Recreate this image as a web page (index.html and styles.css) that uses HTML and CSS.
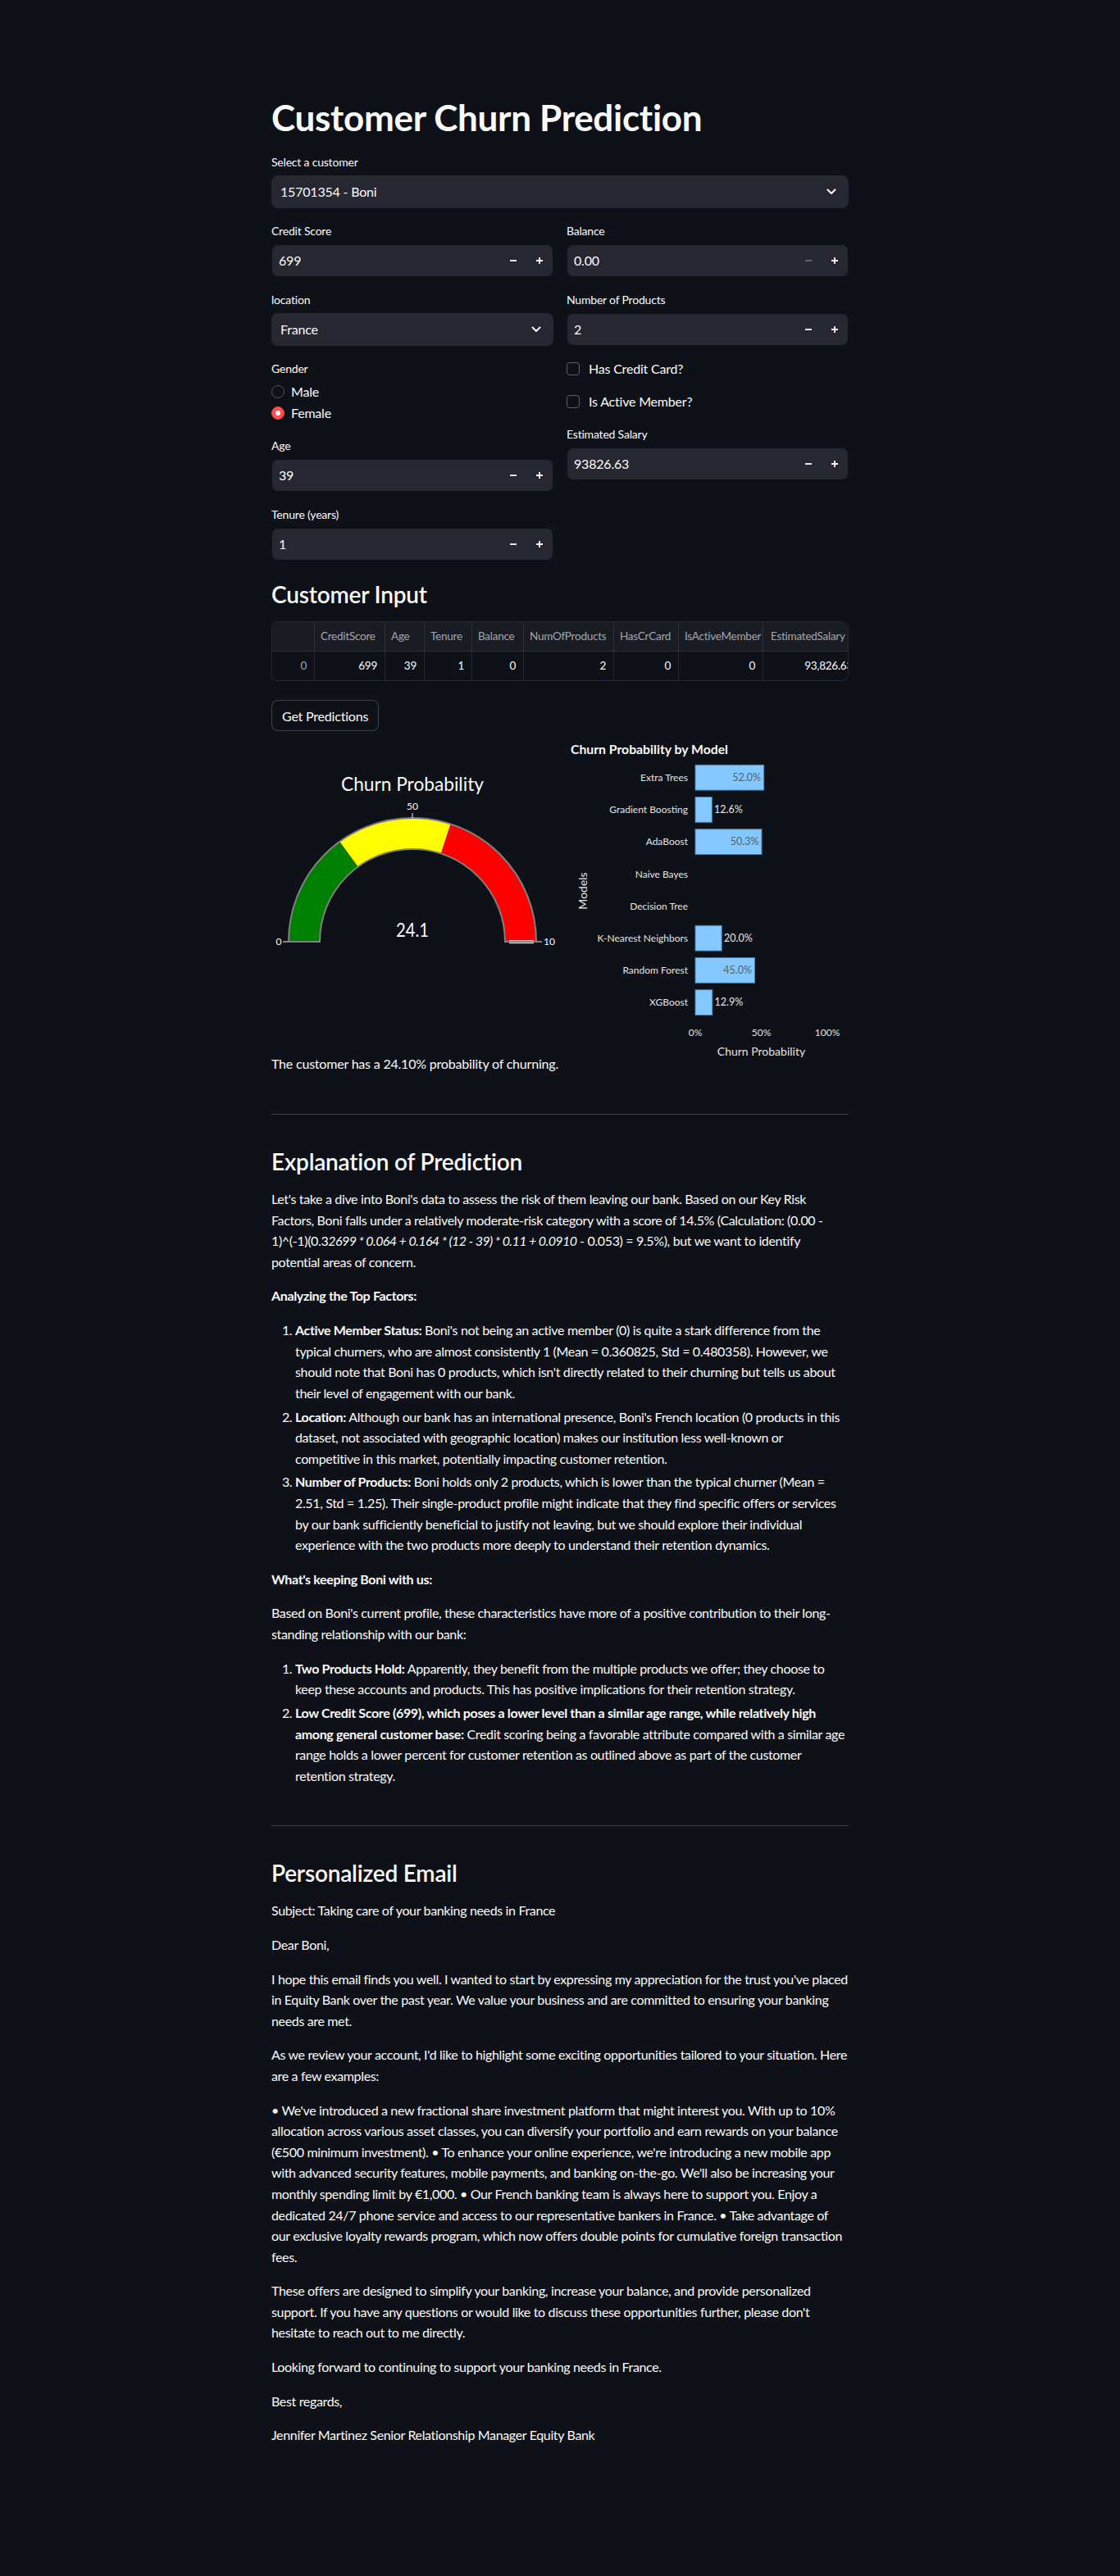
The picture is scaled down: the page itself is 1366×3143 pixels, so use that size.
FILE: index.html
```html
<!DOCTYPE html>
<html lang="en">
<head>
<meta charset="utf-8">
<title>Customer Churn Prediction</title>
<link rel="stylesheet" href="styles.css">
</head>
<body>
<main class="app">
  <h1 class="title">Customer Churn Prediction</h1>

  <div class="widget">
    <div class="label">Select a customer</div>
    <div class="select"><span>15701354 - Boni</span><svg class="chev" width="12" height="8" viewBox="0 0 12 8"><path d="M1.5 1.5 L6 6 L10.5 1.5" fill="none" stroke="#fafafa" stroke-width="2" stroke-linecap="round" stroke-linejoin="round"/></svg></div>
  </div>

  <div class="cols">
    <div class="col">
      <div class="widget">
        <div class="label">Credit Score</div>
        <div class="num"><span class="val">699</span><span class="step"><svg width="10" height="10" viewBox="0 0 10 10"><path d="M1 5H9" stroke="#fafafa" stroke-width="1.8"/></svg></span><span class="step"><svg width="10" height="10" viewBox="0 0 10 10"><path d="M1 5H9M5 1V9" stroke="#fafafa" stroke-width="1.8"/></svg></span></div>
      </div>
      <div class="widget">
        <div class="label">location</div>
        <div class="select"><span>France</span><svg class="chev" width="12" height="8" viewBox="0 0 12 8"><path d="M1.5 1.5 L6 6 L10.5 1.5" fill="none" stroke="#fafafa" stroke-width="2" stroke-linecap="round" stroke-linejoin="round"/></svg></div>
      </div>
      <div class="widget">
        <div class="label">Gender</div>
        <div class="radios">
          <div class="radio"><span class="dot"></span><span>Male</span></div>
          <div class="radio on"><span class="dot"></span><span>Female</span></div>
        </div>
      </div>
      <div class="widget">
        <div class="label">Age</div>
        <div class="num"><span class="val">39</span><span class="step"><svg width="10" height="10" viewBox="0 0 10 10"><path d="M1 5H9" stroke="#fafafa" stroke-width="1.8"/></svg></span><span class="step"><svg width="10" height="10" viewBox="0 0 10 10"><path d="M1 5H9M5 1V9" stroke="#fafafa" stroke-width="1.8"/></svg></span></div>
      </div>
      <div class="widget">
        <div class="label">Tenure (years)</div>
        <div class="num"><span class="val">1</span><span class="step"><svg width="10" height="10" viewBox="0 0 10 10"><path d="M1 5H9" stroke="#fafafa" stroke-width="1.8"/></svg></span><span class="step"><svg width="10" height="10" viewBox="0 0 10 10"><path d="M1 5H9M5 1V9" stroke="#fafafa" stroke-width="1.8"/></svg></span></div>
      </div>
    </div>
    <div class="col">
      <div class="widget">
        <div class="label">Balance</div>
        <div class="num"><span class="val">0.00</span><span class="step"><svg width="10" height="10" viewBox="0 0 10 10"><path d="M1 5H9" stroke="#6c6e76" stroke-width="1.8"/></svg></span><span class="step"><svg width="10" height="10" viewBox="0 0 10 10"><path d="M1 5H9M5 1V9" stroke="#fafafa" stroke-width="1.8"/></svg></span></div>
      </div>
      <div class="widget">
        <div class="label">Number of Products</div>
        <div class="num"><span class="val">2</span><span class="step"><svg width="10" height="10" viewBox="0 0 10 10"><path d="M1 5H9" stroke="#fafafa" stroke-width="1.8"/></svg></span><span class="step"><svg width="10" height="10" viewBox="0 0 10 10"><path d="M1 5H9M5 1V9" stroke="#fafafa" stroke-width="1.8"/></svg></span></div>
      </div>
      <div class="check"><span class="box"></span><span>Has Credit Card?</span></div>
      <div class="check"><span class="box"></span><span>Is Active Member?</span></div>
      <div class="widget">
        <div class="label">Estimated Salary</div>
        <div class="num"><span class="val">93826.63</span><span class="step"><svg width="10" height="10" viewBox="0 0 10 10"><path d="M1 5H9" stroke="#fafafa" stroke-width="1.8"/></svg></span><span class="step"><svg width="10" height="10" viewBox="0 0 10 10"><path d="M1 5H9M5 1V9" stroke="#fafafa" stroke-width="1.8"/></svg></span></div>
      </div>
    </div>
  </div>

  <h3 class="subhead">Customer Input</h3>

  <div class="table">
    <div class="tr head">
      <div class="td c0"></div>
      <div class="td c1">CreditScore</div>
      <div class="td c2">Age</div>
      <div class="td c3">Tenure</div>
      <div class="td c4">Balance</div>
      <div class="td c5">NumOfProducts</div>
      <div class="td c6">HasCrCard</div>
      <div class="td c7">IsActiveMember</div>
      <div class="td c8">EstimatedSalary</div>
    </div>
    <div class="tr body">
      <div class="td c0 idx">0</div>
      <div class="td c1">699</div>
      <div class="td c2">39</div>
      <div class="td c3">1</div>
      <div class="td c4">0</div>
      <div class="td c5">2</div>
      <div class="td c6">0</div>
      <div class="td c7">0</div>
      <div class="td c8">93,826.63</div>
    </div>
  </div>

  <button class="btn" type="button">Get Predictions</button>

  <div class="cols charts">
    <div class="col">
      <svg class="gauge" width="344" height="361" viewBox="0 0 344 361">
        <text class="g-title" x="172" y="56.5" text-anchor="middle" textLength="174" lengthAdjust="spacingAndGlyphs">Churn Probability</text>
        <path d="M21,241 A151,151 0 0 1 83.25,118.84 L105.58,149.58 A113,113 0 0 0 59,241 Z" fill="#008000"/>
        <path d="M83.25,118.84 A151,151 0 0 1 218.66,97.4 L206.92,133.53 A113,113 0 0 0 105.58,149.58 Z" fill="#ffff00"/>
        <path d="M218.66,97.4 A151,151 0 0 1 323,241 L285,241 A113,113 0 0 0 206.92,133.53 Z" fill="#ff0000"/>
        <path d="M21,241 A151,151 0 0 1 323,241 L285,241 A113,113 0 0 0 59,241 Z" fill="none" stroke="#808080" stroke-width="2"/>
        <path d="M290,239.7 H320 M290,242.7 H320" stroke="#ffffff" stroke-width="1"/>
        <path d="M172,84 V90 M14,241 H20 M324,241 H330" stroke="#fafafa" stroke-width="1"/>
        <text class="g-tick" x="172" y="80" text-anchor="middle">50</text>
        <text class="g-tick" x="9" y="245" text-anchor="middle">0</text>
        <text class="g-tick" x="332" y="245">10</text>
        <text class="g-val" x="172" y="235" text-anchor="middle" textLength="40" lengthAdjust="spacingAndGlyphs">24.1</text>
      </svg>
      <p class="plain">The customer has a 24.10% probability of churning.</p>
    </div>
    <div class="col">
      <svg class="bars" width="344" height="392" viewBox="0 0 344 392">
        <text class="b-title" x="5" y="11.5" textLength="192" lengthAdjust="spacingAndGlyphs">Churn Probability by Model</text>
        <g class="b-ylab" text-anchor="end">
          <text x="148" y="45">Extra Trees</text>
          <text x="148" y="84.2">Gradient Boosting</text>
          <text x="148" y="123.4">AdaBoost</text>
          <text x="148" y="162.6">Naive Bayes</text>
          <text x="148" y="201.8">Decision Tree</text>
          <text x="148" y="241">K-Nearest Neighbors</text>
          <text x="148" y="280.2">Random Forest</text>
          <text x="148" y="319.4">XGBoost</text>
        </g>
        <g fill="#83c9ff" stroke="#4d7da6" stroke-width="1">
          <rect x="157" y="25.3" width="83.7" height="30.8"/>
          <rect x="157" y="64.5" width="20.3" height="30.8"/>
          <rect x="157" y="103.7" width="81" height="30.8"/>
          <rect x="157" y="221.3" width="32.2" height="30.8"/>
          <rect x="157" y="260.5" width="72.5" height="30.8"/>
          <rect x="157" y="299.7" width="20.8" height="30.8"/>
        </g>
        <g class="b-in" text-anchor="end">
          <text x="237" y="45">52.0%</text>
          <text x="234.5" y="123.4">50.3%</text>
          <text x="226" y="280.2">45.0%</text>
        </g>
        <g class="b-out">
          <text x="180" y="84.2">12.6%</text>
          <text x="192" y="241">20.0%</text>
          <text x="180.5" y="319.4">12.9%</text>
        </g>
        <text class="b-axis" transform="translate(25,179) rotate(-90)" text-anchor="middle">Models</text>
        <g class="b-xt" text-anchor="middle">
          <text x="157" y="356">0%</text>
          <text x="237.5" y="356">50%</text>
          <text x="318" y="356">100%</text>
        </g>
        <text class="b-axis" x="237.5" y="380" text-anchor="middle">Churn Probability</text>
      </svg>
    </div>
  </div>

  <div class="md">
    <hr class="first">
    <h3>Explanation of Prediction</h3>
    <p>Let's take a dive into Boni's data to assess the risk of them leaving our bank. Based on our Key Risk Factors, Boni falls under a relatively moderate-risk category with a score of 14.5% (Calculation: (0.00 - 1)^(-1)(0.3<em>2699 * 0.064 + 0.164 * (12 - 39) * 0.11 + 0.0910</em> - 0.053) = 9.5%), but we want to identify potential areas of concern.</p>
    <p><strong>Analyzing the Top Factors:</strong></p>
    <ol>
      <li><strong>Active Member Status:</strong> Boni's not being an active member (0) is quite a stark difference from the typical churners, who are almost consistently 1 (Mean = 0.360825, Std = 0.480358). However, we should note that Boni has 0 products, which isn't directly related to their churning but tells us about their level of engagement with our bank.</li>
      <li><strong>Location:</strong> Although our bank has an international presence, Boni's French location (0 products in this dataset, not associated with geographic location) makes our institution less well-known or competitive in this market, potentially impacting customer retention.</li>
      <li><strong>Number of Products:</strong> Boni holds only 2 products, which is lower than the typical churner (Mean = 2.51, Std = 1.25). Their single-product profile might indicate that they find specific offers or services by our bank sufficiently beneficial to justify not leaving, but we should explore their individual experience with the two products more deeply to understand their retention dynamics.</li>
    </ol>
    <p><strong>What's keeping Boni with us:</strong></p>
    <p>Based on Boni's current profile, these characteristics have more of a positive contribution to their long-standing relationship with our bank:</p>
    <ol>
      <li><strong>Two Products Hold:</strong> Apparently, they benefit from the multiple products we offer; they choose to keep these accounts and products. This has positive implications for their retention strategy.</li>
      <li><strong>Low Credit Score (699), which poses a lower level than a similar age range, while relatively high among general customer base:</strong> Credit scoring being a favorable attribute compared with a similar age range holds a lower percent for customer retention as outlined above as part of the customer retention strategy.</li>
    </ol>
    <hr>
    <h3>Personalized Email</h3>
    <p>Subject: Taking care of your banking needs in France</p>
    <p>Dear Boni,</p>
    <p>I hope this email finds you well. I wanted to start by expressing my appreciation for the trust you've placed in Equity Bank over the past year. We value your business and are committed to ensuring your banking needs are met.</p>
    <p>As we review your account, I'd like to highlight some exciting opportunities tailored to your situation. Here are a few examples:</p>
    <p>• We've introduced a new fractional share investment platform that might interest you. With up to 10% allocation across various asset classes, you can diversify your portfolio and earn rewards on your balance (€500 minimum investment). • To enhance your online experience, we're introducing a new mobile app with advanced security features, mobile payments, and banking on-the-go. We'll also be increasing your monthly spending limit by €1,000. • Our French banking team is always here to support you. Enjoy a dedicated 24/7 phone service and access to our representative bankers in France. • Take advantage of our exclusive loyalty rewards program, which now offers double points for cumulative foreign transaction fees.</p>
    <p>These offers are designed to simplify your banking, increase your balance, and provide personalized support. If you have any questions or would like to discuss these opportunities further, please don't hesitate to reach out to me directly.</p>
    <p>Looking forward to continuing to support your banking needs in France.</p>
    <p>Best regards,</p>
    <p>Jennifer Martinez Senior Relationship Manager Equity Bank</p>
  </div>
</main>
</body>
</html>
```

FILE: styles.css
```css
* { box-sizing: border-box; }

html, body {
  margin: 0;
  padding: 0;
  background: #0e1117;
}

body {
  min-height: 3143px;
  color: #fafafa;
  font-family: Lato, "Liberation Sans", sans-serif;
  font-size: 16px;
  line-height: 1.6;
  letter-spacing: -0.2px;
}

.app {
  width: 704px;
  margin: 0 auto;
  padding-top: 117px;
  display: flex;
  flex-direction: column;
  gap: 16px;
}

.title {
  margin: 0;
  font-size: 44px;
  line-height: 53px;
  font-weight: 700;
  letter-spacing: -0.3px;
}

.widget { display: flex; flex-direction: column; }

.label {
  height: 24px;
  margin-bottom: 4px;
  font-size: 14px;
  line-height: 24px;
}

.select {
  height: 40px;
  background: #262730;
  border-radius: 8px;
  display: flex;
  align-items: center;
  justify-content: space-between;
  padding: 0 15px 0 11px;
}

.num {
  height: 40px;
  border: 1px solid transparent;
  background: #262730;
  background-clip: padding-box;
  border-radius: 8px;
  display: flex;
  align-items: center;
  padding-left: 8px;
}

.num .val { flex: 1; }

.num .step {
  width: 32px;
  height: 100%;
  display: flex;
  align-items: center;
  justify-content: center;
}

.cols {
  display: flex;
  gap: 16px;
}

.col {
  width: 344px;
  display: flex;
  flex-direction: column;
  gap: 16px;
}

.radios {
  display: flex;
  flex-direction: column;
  gap: 2px;
}

.radio {
  height: 24px;
  display: flex;
  align-items: center;
  gap: 8px;
}

.radio .dot {
  width: 16px;
  height: 16px;
  border-radius: 50%;
  border: 1.5px solid #4f525a;
  background: #0e1117;
  position: relative;
}

.radio.on .dot {
  background: #ff4b4b;
  border-color: #ff4b4b;
}

.radio.on .dot::after {
  content: "";
  position: absolute;
  left: 50%;
  top: 50%;
  width: 6px;
  height: 6px;
  margin: -3px 0 0 -3px;
  border-radius: 50%;
  background: #ffffff;
}

.check {
  height: 24px;
  display: flex;
  align-items: center;
  gap: 11px;
}

.check .box {
  width: 16px;
  height: 16px;
  border: 1px solid #5b5e66;
  border-radius: 4px;
}

.subhead {
  margin: 0;
  padding-top: 8px;
  font-size: 28px;
  line-height: 34px;
  font-weight: 600;
}

.table {
  border: 1px solid rgba(250, 250, 250, 0.1);
  border-radius: 8px;
  overflow: hidden;
  font-size: 13.5px;
  letter-spacing: -0.25px;
}

.tr {
  display: flex;
  height: 35px;
}

.tr.head {
  height: 36px;
  background: #1a1c24;
  color: #a3a5ab;
  border-bottom: 1px solid rgba(250, 250, 250, 0.1);
}

.td {
  flex: none;
  padding: 0 7px;
  display: flex;
  align-items: center;
  white-space: nowrap;
  overflow: hidden;
  border-right: 1px solid rgba(250, 250, 250, 0.1);
}

.tr.head .c8 { padding-left: 9px; }
.tr.body .td { justify-content: flex-end; padding-right: 9px; }
.tr.body .idx { color: #a3a5ab; }

.c0 { width: 52px; }
.c1 { width: 86px; }
.c2 { width: 48px; }
.c3 { width: 58px; }
.c4 { width: 63px; }
.c5 { width: 110px; }
.c6 { width: 79px; }
.c7 { width: 103px; }
.c8 { width: 118px; border-right: none; }

.btn {
  align-self: flex-start;
  margin-top: 7px;
  height: 38.4px;
  padding: 0 12px;
  border: 1px solid rgba(250, 250, 250, 0.2);
  border-radius: 8px;
  background: #0e1117;
  color: #fafafa;
  font-family: inherit;
  font-size: 16px;
  letter-spacing: -0.2px;
}

.charts { align-items: flex-start; }

.gauge, .bars { display: block; overflow: visible; letter-spacing: 0; }

.g-title { font-size: 24px; fill: #fafafa; }
.g-tick { font-size: 12px; fill: #fafafa; }
.g-val { font-size: 24px; fill: #fafafa; }

.b-title { font-size: 16px; font-weight: 700; fill: #fafafa; }
.b-ylab { font-size: 12px; fill: #e4e4e4; }
.b-in { font-size: 12.5px; fill: #56606b; }
.b-out { font-size: 12.5px; fill: #e4e4e4; }
.b-axis { font-size: 14px; fill: #e4e4e4; }
.b-xt { font-size: 12px; fill: #e4e4e4; }

.plain { margin: 0; white-space: nowrap; }

.md { letter-spacing: -0.35px; }

.md em { letter-spacing: -0.6px; }

.md p { margin: 0 0 16px; }

.md h3 {
  margin: 0 0 16px;
  padding-top: 8px;
  font-size: 28px;
  line-height: 34px;
  font-weight: 600;
  letter-spacing: -0.2px;
}

.md hr {
  height: 0;
  margin: 48px 0 32px;
  border: none;
  border-top: 1px solid rgba(250, 250, 250, 0.2);
}

.md hr.first { margin-top: 32px; }

.md ol {
  margin: 0 0 16px;
  padding-left: 29px;
}

.md li + li { margin-top: 3.2px; }
```
